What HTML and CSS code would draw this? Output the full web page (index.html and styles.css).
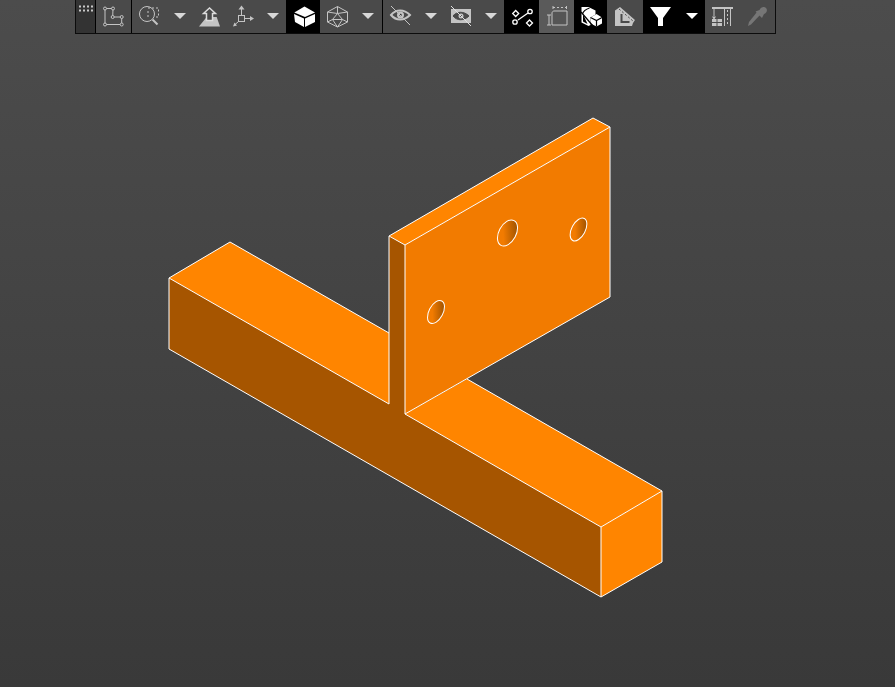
FILE: index.html
```html
<!DOCTYPE html>
<html lang="en">
<head>
<meta charset="utf-8">
<title>3D viewport</title>
<link rel="stylesheet" href="styles.css">
</head>
<body>
<main class="viewport">
  <svg class="scene" viewBox="0 0 895 687" width="895" height="687">
    <defs>
      <linearGradient id="hole" x1="0" y1="1" x2="1" y2="0">
        <stop offset="0.35" stop-color="#f27b00"/>
        <stop offset="0.85" stop-color="#a05300"/>
      </linearGradient>
    </defs>
    <polygon class="side" points="169,278 169,349 601,597 601,527 405,414 405,245 389,236 389,404"/>
    <polygon class="top" points="169,278 230,242 389,333 389,404"/>
    <polygon class="top" points="405,414 467,379 662,491 601,527"/>
    <polygon class="top" points="601,527 662,491 662,562 601,597"/>
    <polygon class="face" points="405,245 610,127 610,297 405,414"/>
    <polygon class="top" points="389,236 593,118 610,127 405,245"/>
    <ellipse class="hole" cx="507.5" cy="233" rx="8.6" ry="14" transform="rotate(28 507.5 233)"/>
    <ellipse class="hole" cx="578.5" cy="229.5" rx="6.8" ry="12.4" transform="rotate(28 578.5 229.5)"/>
    <ellipse class="hole" cx="436" cy="312" rx="7" ry="12.4" transform="rotate(28 436 312)"/>
    <path class="edge" d="M389 404L169 278L230 242L389 333M389 404V236L593 118L610 127V297L405 414V245L389 236M405 245L610 127M169 278V349L601 597L662 562V491L601 527V597M601 527L405 414M467 379L662 491"/>
  </svg>

  <nav class="toolbar">
    <div class="grip">
      <svg width="19" height="33" viewBox="76 0 19 33"><path class="griprow" d="M79 6.500h14M79 10.500h14"/></svg>
    </div>
    <div class="group">
      <button class="tool w35"><svg width="35" height="33" viewBox="96 0 35 33"><g class="ln">
        <path d="M105 8.500h8l-.3 8.500h9v7.500H105z"/>
        <g class="nodes"><circle cx="105" cy="8.500" r="1.500"/><circle cx="113" cy="8.500" r="1.500"/><circle cx="112.700" cy="17" r="1.500"/><circle cx="121.700" cy="17" r="1.500"/><circle cx="121.700" cy="24.500" r="1.500"/><circle cx="105" cy="24.500" r="1.500"/></g>
      </g></svg></button>
    </div>
    <div class="group gap2">
      <button class="tool w35"><svg width="35" height="33" viewBox="132 0 35 33"><g class="ln">
        <circle cx="147" cy="14" r="7.500"/><path class="thick" d="M152.500 19.500l5 5"/>
        <path class="dash" d="M148 8h10.500v9H155M148 11v6"/>
      </g></svg></button>
      <button class="caret w25"></button>
      <button class="tool w34"><svg width="34" height="33" viewBox="192 0 34 33">
        <path class="solid" d="M206.700 17h10l3.300 9.500h-21z"/>
        <path class="arrow" d="M209.500 8l-6 5.500h3v7h6v-7h3z"/>
      </svg></button>
      <button class="tool w34"><svg width="34" height="33" viewBox="226 0 34 33"><g class="ln">
        <rect x="238.500" y="15.500" width="6" height="6"/>
        <path d="M241.500 15.500V8M238.500 21.500l-4 3.500M244.500 18.500h7"/>
        <path class="solid" d="M241.500 5.500l-3 4h6zM254 18.500l-4-2.500v5zM233 26.500l4-1-2.500-3z"/>
      </g></svg></button>
      <button class="caret w26"></button>
    </div>
    <div class="group">
      <button class="tool black w32"><svg width="32" height="33" viewBox="288 0 32 33">
        <path class="white" d="M304.500 6.500l10.500 6-10 4.500-10.700-4.500z"/>
        <path class="white" d="M294 14l10 4.500v8.500l-9-5zM315 14v8l-10 5v-8.500z"/>
      </svg></button>
      <button class="tool w34"><svg width="34" height="33" viewBox="321 0 34 33"><g class="ln">
        <path d="M338.500 6.500l10 5.500v10l-10 5-10-5V12zM338.500 6.500v7l-10-1.500M338.500 13.500l10-1.500M338.500 13.500l5 6M338.500 13.500l-5 6M333.500 19.500h10M333.500 19.500l-5 2.500M343.500 19.500l5 2.500M333.500 19.500l5 7.500M343.500 19.500l-5 7.500"/>
      </g></svg></button>
      <button class="caret w28"></button>
    </div>
    <div class="group">
      <button class="tool w35"><svg width="35" height="33" viewBox="383 0 35 33"><g class="ln">
        <path class="thick" d="M391 15c5-6 13-6 19 0-6 6-14 6-19 0z"/><circle class="solid" cx="400.500" cy="15" r="3.500"/><circle class="pupil" cx="400.500" cy="15" r="1.200"/>
        <path d="M391 6l19 19"/>
      </g></svg></button>
      <button class="caret w26"></button>
      <button class="tool w34"><svg width="34" height="33" viewBox="444 0 34 33">
        <rect class="solid" x="451" y="9" width="20" height="14"/>
        <path class="eye" d="M453 16c4-5 11-5 16 0-5 5-12 5-16 0z"/><circle class="solid" cx="461" cy="16" r="2.500"/><circle class="pupil" cx="461" cy="16" r="1"/>
        <path class="slash" d="M451 6l20 20"/>
      </svg></button>
      <button class="caret w26"></button>
    </div>
    <div class="group">
      <button class="tool black w34"><svg width="34" height="33" viewBox="505 0 34 33"><g class="wl">
        <path d="M518 20l10-7"/>
        <path d="M515.700 10.500l3 3-3 3-3-3zM529.500 20l3 3-3 3-3-3z"/>
        <circle cx="530" cy="11.500" r="2.200"/><circle cx="515" cy="22" r="2.200"/>
      </g></svg></button>
      <button class="tool light w35"><svg width="35" height="33" viewBox="539 0 35 33"><g class="ln">
        <path class="boxfill" d="M552 13c0-1 1-2 2-2h13v14h-15z"/>
        <path d="M547 15h4M547 25h4M549 15v10"/>
        <path class="dash" d="M553 7.500h13.500"/><path d="M553 6v3M566.500 6v3"/>
      </g></svg></button>
      <button class="tool black w33"><svg width="33" height="33" viewBox="574 0 33 33">
        <path class="white" d="M581.500 7h7l7 3.500v4l-5 3V25l-2 1-7-3.500z"/>
        <path class="white" d="M590.500 17.500l6-3.500 5.500 3.500v6l-5.500 3-6-3z"/>
        <path class="hollow" d="M583 14v7.500l4.500 2.500z"/>
        <path class="cut" d="M581 12l12 14M589.500 8c-3 1-6 3-7 6M590.500 17.500l6 3 5.500-3M596.500 20.500v6"/>
      </svg></button>
      <button class="tool w36"><svg width="36" height="33" viewBox="607 0 36 33">
        <path class="solid" d="M615 10.500l5-3.500 15 13-2 3-1 3h-17z"/>
        <path class="cut2" d="M621.500 14v8h8"/>
        <path class="dash2" d="M619 9l14 12"/>
      </svg></button>
    </div>
    <div class="group gap2">
      <button class="tool black w36"><svg width="36" height="33" viewBox="644 0 36 33">
        <path class="white" d="M650 7h21l-8 11v8h-5v-8z"/>
      </svg></button>
      <button class="caret black w23"></button>
    </div>
    <div class="group last">
      <button class="tool w35"><svg width="35" height="33" viewBox="705 0 35 33"><g class="ln">
        <path class="thick" d="M712 8h21"/>
        <path d="M724.500 9v17M730.500 9v17M714 9v7"/>
        <path class="dash" d="M727.500 10v16"/>
        <path class="solid" d="M712 16.500h4l-1.500 2.500h-1zM712 19h10v7h-10z"/>
        <path class="gridcut" d="M717 19v7M712 22.500h10"/>
      </g></svg></button>
      <button class="tool"><svg width="34" height="33" viewBox="740 0 34 33">
        <path class="dropper" d="M748 26l1-4 8-10 3 3-9 9.500z"/>
        <path class="dropper" d="M755.500 11.500l4-1.500c1-3 5-4 6.500-2 2 2 .5 5-2 6l-2 4z"/>
      </svg></button>
    </div>
  </nav>
</main>
</body>
</html>
```

FILE: styles.css
```css
* { box-sizing: border-box; }
html, body { margin: 0; padding: 0; }
body { width: 895px; height: 687px; overflow: hidden; background: #404040; }

.viewport {
  position: relative;
  width: 895px;
  height: 687px;
  background: linear-gradient(to bottom, #4c4c4c 0%, #393939 100%);
}
.scene { display: block; }

.top { fill: #ff8500; }
.side { fill: #a65500; }
.face { fill: #f27b00; }
.hole { fill: url(#hole); stroke: #fff; stroke-width: 1; }
.edge { fill: none; stroke: #fff; stroke-width: 1; stroke-linejoin: round; }

.toolbar {
  position: absolute;
  top: 0;
  left: 75px;
  width: 701px;
  height: 34px;
  display: flex;
  background: #000;
  border: 1px solid #0c0c0c;
  border-top: 0;
}
.grip { width: 19px; height: 33px; background: #333; margin-right: 1px; }
.griprow { stroke: #c8c8c8; stroke-width: 2; stroke-dasharray: 2 2; fill: none; }

.group { display: flex; height: 33px; background: #4a4a4a; margin-right: 1px; }
.group.gap2 { margin-right: 2px; }
.group.last { margin-right: 0; flex: 1; }

button { display: block; height: 33px; padding: 0; border: 0; background: transparent; }
.tool svg { display: block; }
.black { background: #000; }
.light { background: #5a5a5a; }
.w23 { width: 23px; }
.w25 { width: 25px; }
.w26 { width: 26px; }
.w28 { width: 28px; }
.w32 { width: 32px; }
.w33 { width: 33px; }
.w34 { width: 34px; }
.w35 { width: 35px; }
.w36 { width: 36px; }

.caret { position: relative; }
.caret::after {
  content: "";
  position: absolute;
  left: 50%;
  top: 13px;
  margin-left: -6px;
  border-left: 6px solid transparent;
  border-right: 6px solid transparent;
  border-top: 6px solid #d8d8d8;
}
.caret.black::after { border-top-color: #fff; }

.ln { fill: none; stroke: #c4c4c4; stroke-width: 1; }
.ln .thick { stroke-width: 2; }
.ln .dash { stroke-dasharray: 2 2; }
.ln .nodes circle { fill: #4a4a4a; }
.ln .solid, .solid { fill: #c4c4c4; stroke: none; }
.ln .boxfill { fill: #555; }
.ln .gridcut { stroke: #4a4a4a; }
.ln .pupil, .pupil { fill: #333; stroke: none; }
.arrow { fill: #4a4a4a; stroke: #dcdcdc; stroke-width: 1.500; }
.eye { fill: #4a4a4a; stroke: #4a4a4a; }
.slash { stroke: #e0e0e0; stroke-width: 1; fill: none; }
.white { fill: #fff; stroke: none; }
.hollow { fill: #000; }
.wl { fill: none; stroke: #fff; stroke-width: 1.300; }
.cut { fill: none; stroke: #000; stroke-width: 1.200; }
.cut2 { fill: none; stroke: #4a4a4a; stroke-width: 2; }
.dash2 { fill: none; stroke: #4a4a4a; stroke-width: 1; stroke-dasharray: 2 2; }
.dropper { fill: #767676; stroke: none; }
```
